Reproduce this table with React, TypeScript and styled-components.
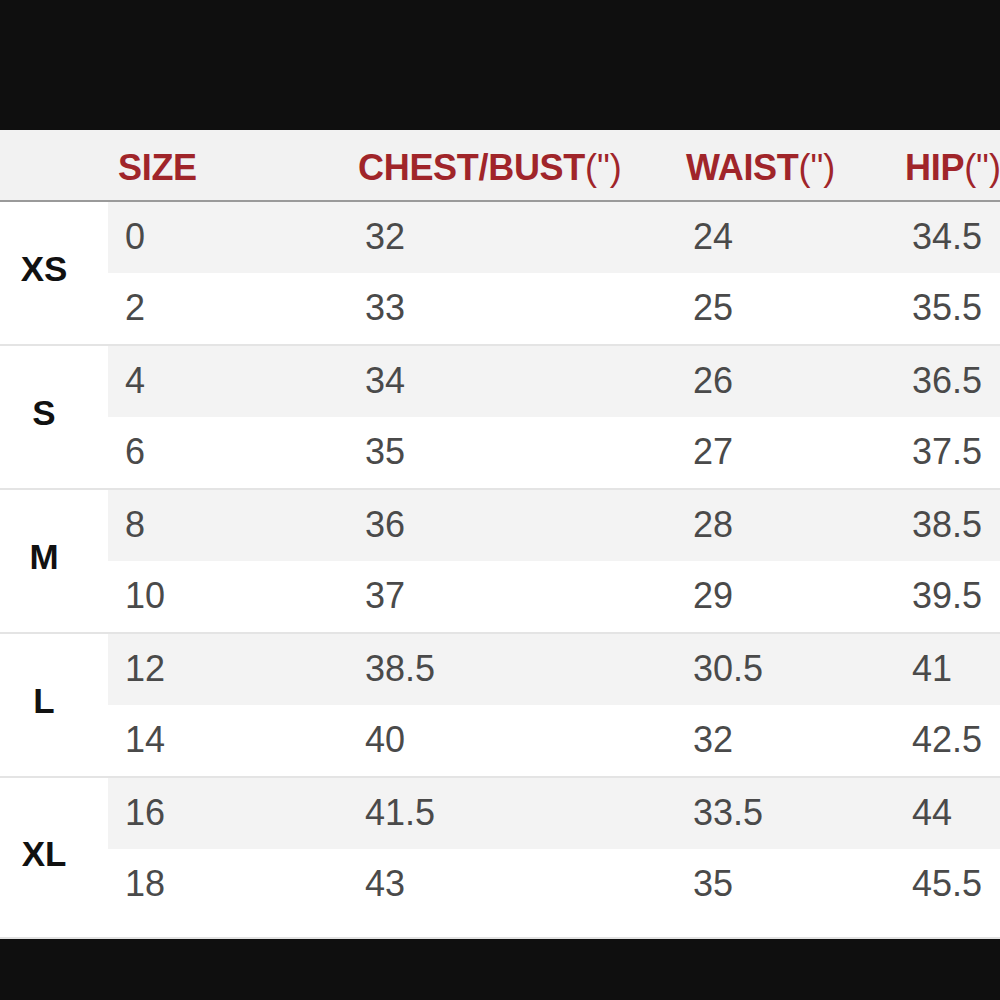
import React from "react";
import styled, { createGlobalStyle } from "styled-components";

interface SizeRow {
  size: string;
  chest: string;
  waist: string;
  hip: string;
}

interface SizeGroup {
  label: string;
  rows: SizeRow[];
}

const groups: SizeGroup[] = [
  {
    label: "XS",
    rows: [
      { size: "0", chest: "32", waist: "24", hip: "34.5" },
      { size: "2", chest: "33", waist: "25", hip: "35.5" },
    ],
  },
  {
    label: "S",
    rows: [
      { size: "4", chest: "34", waist: "26", hip: "36.5" },
      { size: "6", chest: "35", waist: "27", hip: "37.5" },
    ],
  },
  {
    label: "M",
    rows: [
      { size: "8", chest: "36", waist: "28", hip: "38.5" },
      { size: "10", chest: "37", waist: "29", hip: "39.5" },
    ],
  },
  {
    label: "L",
    rows: [
      { size: "12", chest: "38.5", waist: "30.5", hip: "41" },
      { size: "14", chest: "40", waist: "32", hip: "42.5" },
    ],
  },
  {
    label: "XL",
    rows: [
      { size: "16", chest: "41.5", waist: "33.5", hip: "44" },
      { size: "18", chest: "43", waist: "35", hip: "45.5" },
    ],
  },
];

const GlobalStyle = createGlobalStyle`
  html, body {
    margin: 0;
    padding: 0;
    background: #0f0f0f;
    overflow: hidden;
  }
`;

const Page = styled.div`
  width: 1000px;
  height: 1000px;
  padding-top: 130px;
  box-sizing: border-box;
  background: #0f0f0f;
  overflow: hidden;
  font-family: "Liberation Sans", Arial, sans-serif;
`;

const Table = styled.div`
  background: #ffffff;
  border-bottom: 2px solid #e2e2e2;
`;

const HeaderRow = styled.div`
  display: grid;
  grid-template-columns: 108px 240px 328px 219px 1fr;
  height: 70px;
  align-items: center;
  background: #f2f2f2;
  border-bottom: 2px solid #9a9a9a;
`;

const HeaderCell = styled.div`
  padding-left: 10px;
  padding-top: 6px;
  font-size: 36px;
  font-weight: bold;
  color: #a0252a;
  white-space: nowrap;
  letter-spacing: -0.3px;
`;

const Unit = styled.span`
  font-weight: normal;
  letter-spacing: 0;
`;

const Group = styled.div<{ $last?: boolean }>`
  display: flex;
  border-bottom: ${(p) => (p.$last ? "none" : "2px solid #e4e4e4")};
`;

const GroupLabel = styled.div`
  width: 108px;
  flex: none;
  display: flex;
  align-items: center;
  justify-content: center;
  padding-right: 20px;
  padding-bottom: 8px;
  box-sizing: border-box;
  font-size: 35px;
  font-weight: bold;
  color: #111111;
`;

const Rows = styled.div`
  flex: 1;
  display: flex;
  flex-direction: column;
`;

const Row = styled.div<{ $shaded: boolean; $tall?: boolean }>`
  display: grid;
  grid-template-columns: 240px 328px 219px 1fr;
  height: ${(p) => (p.$tall ? "88px" : "71px")};
  align-items: ${(p) => (p.$tall ? "start" : "center")};
  padding-top: ${(p) => (p.$tall ? "16px" : "0")};
  box-sizing: border-box;
  background: ${(p) => (p.$shaded ? "#f3f3f3" : "#ffffff")};
`;

const Cell = styled.div`
  padding-left: 17px;
  font-size: 36px;
  color: #4a4a4a;
  margin-top: -2px;
  white-space: nowrap;
`;

export default function App() {
  return (
    <>
      <GlobalStyle />
      <Page>
        <Table>
          <HeaderRow>
            <div />
            <HeaderCell>SIZE</HeaderCell>
            <HeaderCell>
              CHEST/BUST<Unit>(")</Unit>
            </HeaderCell>
            <HeaderCell>
              WAIST<Unit>(")</Unit>
            </HeaderCell>
            <HeaderCell>
              HIP<Unit>(")</Unit>
            </HeaderCell>
          </HeaderRow>
          {groups.map((g, gi) => {
            const last = gi === groups.length - 1;
            return (
              <Group key={g.label} $last={last}>
                <GroupLabel>{g.label}</GroupLabel>
                <Rows>
                  {g.rows.map((r, ri) => (
                    <Row key={r.size} $shaded={ri === 0} $tall={last && ri === 1}>
                      <Cell>{r.size}</Cell>
                      <Cell>{r.chest}</Cell>
                      <Cell>{r.waist}</Cell>
                      <Cell>{r.hip}</Cell>
                    </Row>
                  ))}
                </Rows>
              </Group>
            );
          })}
        </Table>
      </Page>
    </>
  );
}
